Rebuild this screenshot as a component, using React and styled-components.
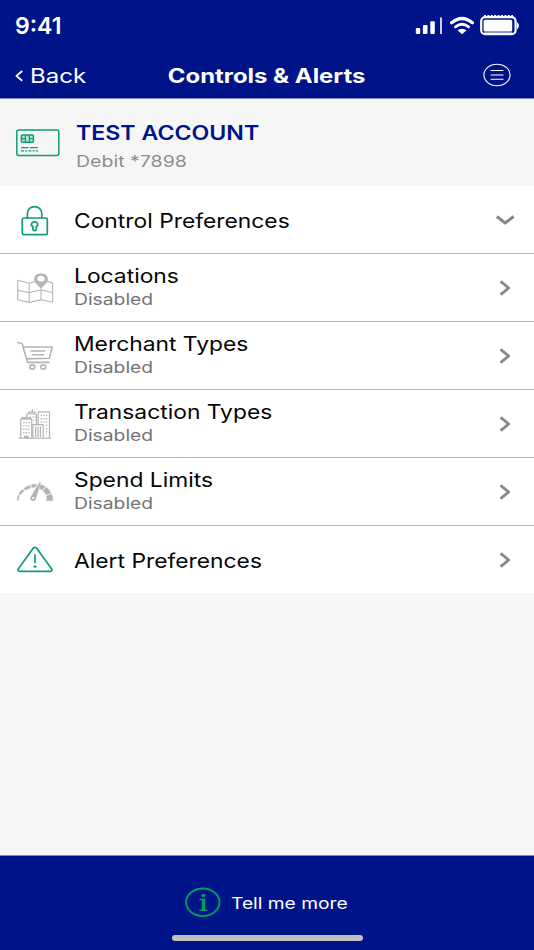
import React from 'react';
import styled, { createGlobalStyle } from 'styled-components';

const GlobalStyle = createGlobalStyle`
  * {
    box-sizing: border-box;
  }

  body {
    margin: 0;
    background: #f6f6f6;
    font-family: Inter, "Liberation Sans", sans-serif;
  }
`;

const Screen = styled.div`
  display: flex;
  flex-direction: column;
  width: 534px;
  height: 950px;
  overflow: hidden;
  background: #f6f6f6;
`;

const Header = styled.header`
  flex: none;
  height: 99px;
  background: #001489;
  border-bottom: 1px solid #7f89c4;
  color: white;
`;

const StatusBar = styled.div`
  display: flex;
  justify-content: space-between;
  align-items: center;
  height: 52px;
  padding: 0 14px 0 15px;
`;

const NavBar = styled.nav`
  display: grid;
  grid-template-columns: 1fr auto 1fr;
  align-items: center;
  height: 47px;
  padding: 0 14px;
`;

const BackButton = styled.button`
  display: flex;
  align-items: center;
  gap: 6px;
  padding: 0;
  border: none;
  background: none;
  color: white;
  font: inherit;
  cursor: pointer;
`;

const MenuButton = styled(BackButton)`
  justify-self: end;
  margin: 0 9px 2px 0;
`;

// the typeface is drawn wider than Inter, each text style has its own ratio
const Text = styled.span`
  display: block;
  white-space: nowrap;
  transform: scaleX(1.2);
  transform-origin: left center;
`;

const Clock = styled(Text)`
  font-size: 23px;
  font-weight: 600;
  transform: none;
`;

const BackLabel = styled(Text)`
  font-size: 20px;
`;

const PageTitle = styled(Text)`
  font-size: 19.5px;
  font-weight: 700;
  transform: scaleX(1.225);
  transform-origin: center;
`;

const Account = styled.section`
  display: flex;
  flex: none;
  align-items: center;
  height: 87px;
`;

const AccountText = styled.div`
  padding-top: 8px;
`;

const AccountName = styled(Text)`
  color: #001489;
  font-size: 19.5px;
  font-weight: 600;
  line-height: 28px;
  transform: scaleX(1.187);
`;

const AccountNumber = styled(Text)`
  color: #8e8e90;
  font-size: 16px;
  line-height: 28px;
  transform: scaleX(1.22);
`;

const IconSlot = styled.div`
  display: flex;
  flex: none;
  width: ${props => (props.$wide ? 76 : 74.4)}px;
  padding-left: 15px;
`;

const RowList = styled.ul`
  flex: none;
  margin: 0;
  padding: 0;
  list-style: none;
`;

const Row = styled.li`
  display: flex;
  align-items: center;
  height: 68px;
  padding-right: 19px;
  background: white;
  border-bottom: 1px solid #8fd3bd;
  cursor: pointer;

  &:last-child {
    height: 67px;
    border-bottom: none;
  }
`;

const RowText = styled.div`
  flex: 1;
`;

const RowTitle = styled(Text)`
  padding-top: ${props => (props.$alone ? 3 : 0)}px;
  color: #050505;
  font-size: 20px;
  line-height: 24px;
  transform: scaleX(1.141);
`;

const RowStatus = styled(Text)`
  color: #737377;
  font-size: 16px;
  line-height: 23px;
  transform: scaleX(1.205);
`;

const Footer = styled.footer`
  display: flex;
  flex-direction: column;
  flex: none;
  align-items: center;
  height: 95px;
  margin-top: auto;
  padding-top: 30px;
  border-top: 1px solid #7f89c4;
  background: #001489;
`;

const MoreLink = styled.div`
  display: flex;
  align-items: center;
  gap: 10px;
  width: 164px;
  height: 32px;
`;

const MoreLabel = styled(Text)`
  padding-top: 1px;
  color: white;
  font-size: 16px;
`;

const HomeIndicator = styled.div`
  width: 191px;
  height: 6px;
  margin-top: 16.5px;
  border-radius: 3px;
  background: #c2c0c0;
`;

const Icon = styled.svg`
  display: block;
  flex: none;
  fill: none;
  stroke: ${props => props.$color || 'currentColor'};
  stroke-width: ${props => props.$weight || 1.7};
  stroke-linecap: ${props => props.$cap || 'round'};
  stroke-linejoin: round;
`;

const GREEN = '#0e9f6e';
const GREY = '#b4b4b6';

const StatusGlyphs = () => (
  <Icon width="106" height="24" viewBox="414 14 106 24" $color="none">
    <g fill="white">
      <rect x="415.8" y="28" width="4.4" height="6" rx="1" />
      <rect x="422.9" y="25" width="4.6" height="9" rx="1" />
      <rect x="430.3" y="21.3" width="4.5" height="12.7" rx="1" />
      <rect x="440.2" y="17.3" width="1.6" height="16.7" rx="0.6" />
      <path d="M457.5 30.3 Q462 27.1 466.5 30.3 L462 34.2 Z" />
      <rect x="483.6" y="19.8" width="28.6" height="11.6" rx="1.5" />
      <path d="M517 22 Q521 25.7 517 29.4 Z" />
    </g>
    <g stroke="white">
      <path d="M451.6 22.8 Q462 14.2 472.4 22.8" strokeWidth="3.2" />
      <path d="M455.4 26.8 Q462 21.8 468.6 26.8" strokeWidth="2.8" />
      <rect x="481.2" y="17.2" width="34.4" height="17" rx="4" strokeWidth="2.2" />
      <path d="M484 15.6 H513" strokeWidth="1.4" strokeDasharray="2 1.4" strokeLinecap="butt" />
      <path d="M484.5 32.3 H512" strokeWidth="0.7" />
    </g>
  </Icon>
);

const MenuIcon = () => (
  <Icon width="28" height="24" viewBox="0 0 28 24" $weight="1.1">
    <ellipse cx="14" cy="12" rx="13.1" ry="10.7" />
    <path d="M8 7.5 H20 M8 12 H20 M8 16.3 H20" />
  </Icon>
);

const CardIcon = () => (
  <Icon width="45" height="28" viewBox="15 128.5 45 28" $color={GREEN} $weight="1.5">
    <rect x="16.8" y="129.5" width="42" height="25.4" rx="2" />
    <rect x="21.4" y="134.6" width="12" height="7.2" rx="1" fill="#b5dfd0" />
    <path d="M25.4 134.6 V141.8 M29.4 134.6 V141.8 M21.4 138.2 H25.4 M29.4 138.2 H33.4" strokeWidth="1.2" />
    <path d="M21 147.2 H28.6 M30 147.2 H37.8" strokeWidth="1.3" strokeLinecap="butt" />
    <path d="M21 150.3 H38" strokeWidth="1.3" strokeLinecap="butt" strokeDasharray="3 1.2 2 1.2" />
  </Icon>
);

const LockIcon = () => (
  <Icon width="40" height="34" viewBox="15 203 40 34" $color={GREEN}>
    <rect x="22.3" y="218" width="25" height="16.6" rx="1.4" />
    <path d="M27.4 218 V213.4 C27.4 204.3 41.8 204.3 41.8 213.4 V218" />
    <path d="M32.9 226.6 C30.2 225.2 31.2 221.9 34.6 221.9 C38 221.9 39 225.2 36.3 226.6 V229.2 Q36.3 230.6 34.6 230.6 Q32.9 230.6 32.9 229.2 Z" />
  </Icon>
);

const MapIcon = () => (
  <Icon width="40" height="34" viewBox="15 271 40 34" $color={GREY} $weight="1.1">
    <path d="M34.5 281.8 L29.2 283.3 L17.7 280.3 V299.8 L29.2 302.4 L41 299.8 L52.6 302.2 V283 L47 281.4" />
    <path d="M29.2 283.3 V302.4 M41 290 V299.8" />
    <path d="M17.7 290.3 L29.2 292.8 L41 289.8 L52.6 292.8" strokeDasharray="5 1 20 1" />
    <path d="M41 289 C38 284.6 34.2 283.3 34.2 279 C34.2 271.8 47.8 271.8 47.8 279 C47.8 283.3 44 284.6 41 289 Z" fill={GREY} stroke="none" />
    <ellipse cx="41" cy="278.7" rx="3.7" ry="2.9" fill="white" stroke="none" />
  </Icon>
);

const CartIcon = () => (
  <Icon width="40" height="34" viewBox="15 339 40 34" $color={GREY} $weight="1.6">
    <path d="M17.8 342.6 L22.2 343.8 L27.6 362.4 H49" />
    <path d="M23.2 347 H52.3 L49.3 358.3 L26.6 358.9" />
    <path d="M31 351 H44.5 M32.4 354.8 H43.6" />
    <ellipse cx="32.3" cy="367" rx="2.5" ry="2.1" />
    <ellipse cx="43.2" cy="367" rx="2.5" ry="2.1" />
  </Icon>
);

const CityIcon = () => (
  <Icon width="40" height="34" viewBox="15 407 40 34" $color={GREY} $weight="1.2" $cap="butt">
    <path d="M19 438.2 H51" />
    <path d="M20.8 438 V419.2 H31.7 V438 M22 419 V417.6 H30.5 V419" />
    <path d="M26.8 417.4 V414 H36.5 V424 M28.5 414 V412.2 H35 V414 M32.3 412 V409" />
    <path d="M38.2 424 V411.8 H49.5 V438" />
    <path d="M32.8 438 V424.6 H43.2 V438" />
    <path d="M35.6 426.5 V437 M38 426.5 V437 M40.4 426.5 V437" />
    <path d="M23.8 422 V434 M26.3 422 V434 M28.8 422 V434 M41.3 414.8 V424 M46.4 414.8 V435" strokeWidth="1.4" strokeDasharray="1.3 2" />
    <path d="M43.9 414.8 V424" strokeWidth="1.3" strokeDasharray="1.3 2" />
    <path d="M29.8 417.2 H36 M33 420 H36" strokeDasharray="1.2 1.3" />
    <path d="M24 436.8 H29" strokeWidth="2.2" />
  </Icon>
);

const GaugeIcon = () => (
  <Icon width="40" height="34" viewBox="15 475 40 34" $color={GREY} $cap="butt">
    <g fill={GREY} strokeWidth="0.3">
      <path d="M17.2 500.5 Q17.2 497.5 18.1 495.2 L19.4 495.8 Q18.5 498 18.5 500.5 Z" />
      <path d="M18.6 494.2 Q20 491.2 22.7 489.2 L24.3 491 Q21.6 492.6 20.1 495 Z" />
      <path d="M23.8 488.4 Q26.4 486.2 29.8 485.2 L30.8 487.9 Q27.7 488.7 25.5 490.3 Z" />
      <path d="M31 484.8 Q33.6 484 36.6 484 L35.5 487.2 Q33.6 487.2 31.8 487.6 Z" />
      <path d="M40.6 484.4 Q43.4 485.2 45.4 486.6 L42.2 490.2 Q41.1 489.3 39.2 488.6 Z" />
      <path d="M46.1 487.2 Q49.4 489.5 51.2 492.8 L46.2 495 Q45.1 492.5 42.9 490.8 Z" />
      <path d="M51.5 493.8 Q53 497 53 500.8 H46.6 Q46.8 498 46.5 496 Z" />
      <path d="M39.7 482 L40.6 482.3 L35.9 499 Q34.8 501.4 32.2 500.8 Q29.7 499.8 30.7 497.2 Z" />
    </g>
    <circle cx="33.2" cy="498" r="1.1" fill="white" stroke="none" />
  </Icon>
);

const AlertIcon = () => (
  <Icon width="40" height="34" viewBox="15 543 40 34" $color={GREEN}>
    <path d="M33.3 548.1 Q34.9 546.6 36.5 548.1 L51.9 569.3 Q52.7 571.3 50.2 571.3 H19.8 Q17.3 571.3 18.1 569.3 Z" />
    <path d="M35 554.8 V562.4" />
    <ellipse cx="35" cy="566.6" rx="1.6" ry="1.2" fill={GREEN} stroke="none" />
  </Icon>
);

const InfoIcon = () => (
  <Icon width="36" height="30" viewBox="185 887 36 30" $color="#009a63" $weight="1.9">
    <ellipse cx="202.8" cy="902.3" rx="16.7" ry="13.8" />
    <ellipse cx="203.4" cy="895.4" rx="2.1" ry="1.6" fill="#009a63" stroke="none" />
    <path d="M199.5 898.7 H205.3 V909.5 H207.3 V911 H199.3 V909.5 H201.8 V900.2 H199.5 Z" fill="#009a63" stroke="none" />
  </Icon>
);

const BackChevron = () => (
  <Icon width="10" height="12" viewBox="0 0 10 12" $weight="1.8" $cap="butt">
    <path d="M8.2 1 L2.4 5.9 L8.2 10.8" />
  </Icon>
);

const Chevron = ({ down }) => (
  <Icon width="20" height="16" viewBox="0 0 20 16" $color="#87878b" $weight="2.9" $cap="butt">
    <path d={down ? 'M1.8 4.5 L10.2 11 L18.6 4.5' : 'M5.6 1.3 L13.6 8 L5.6 14.7'} />
  </Icon>
);

const rows = [
  { title: 'Control Preferences', icon: LockIcon, down: true },
  { title: 'Locations', icon: MapIcon, status: 'Disabled' },
  { title: 'Merchant Types', icon: CartIcon, status: 'Disabled' },
  { title: 'Transaction Types', icon: CityIcon, status: 'Disabled' },
  { title: 'Spend Limits', icon: GaugeIcon, status: 'Disabled' },
  { title: 'Alert Preferences', icon: AlertIcon },
];

const App = () => (
  <Screen>
    <GlobalStyle />
    <Header>
      <StatusBar>
        <Clock>9:41</Clock>
        <StatusGlyphs />
      </StatusBar>
      <NavBar>
        <BackButton>
          <BackChevron />
          <BackLabel>Back</BackLabel>
        </BackButton>
        <PageTitle>Controls &amp; Alerts</PageTitle>
        <MenuButton><MenuIcon /></MenuButton>
      </NavBar>
    </Header>
    <Account>
      <IconSlot $wide><CardIcon /></IconSlot>
      <AccountText>
        <AccountName>TEST ACCOUNT</AccountName>
        <AccountNumber>Debit *7898</AccountNumber>
      </AccountText>
    </Account>
    <RowList>
      {rows.map(({ title, status, icon: RowIcon, down }) => (
        <Row key={title}>
          <IconSlot><RowIcon /></IconSlot>
          <RowText>
            <RowTitle $alone={!status}>{title}</RowTitle>
            {status && <RowStatus>{status}</RowStatus>}
          </RowText>
          <Chevron down={down} />
        </Row>
      ))}
    </RowList>
    <Footer>
      <MoreLink>
        <InfoIcon />
        <MoreLabel>Tell me more</MoreLabel>
      </MoreLink>
      <HomeIndicator />
    </Footer>
  </Screen>
);

export default App;
